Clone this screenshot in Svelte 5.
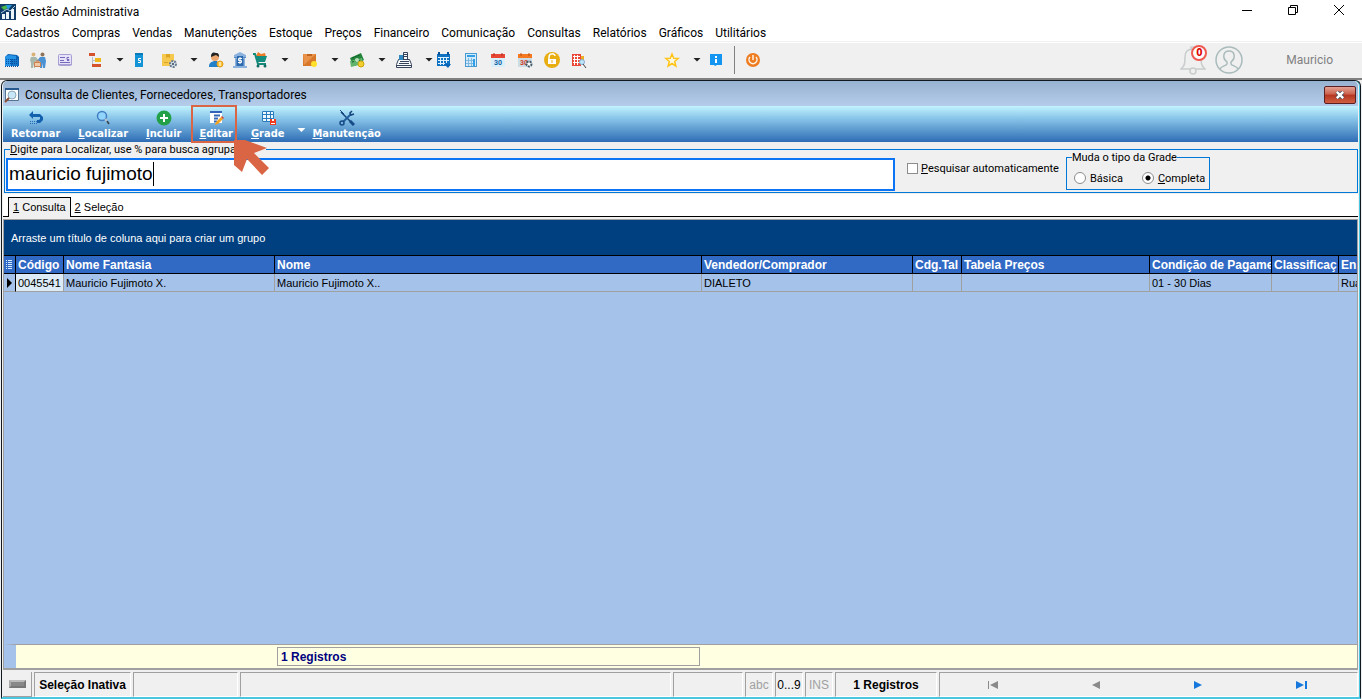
<script>
  const menus = [
    'Cadastros', 'Compras', 'Vendas', 'Manutenções', 'Estoque', 'Preços', 'Financeiro',
    'Comunicação', 'Consultas', 'Relatórios', 'Gráficos', 'Utilitários'
  ]

  const icons = {
    building: '<path fill="#0d62b5" d="M3 6l3-3 9 1 2 2v9H3z"/><path fill="#2493e8" d="M4 5l3-1 7 1v3H9v7H3V7z"/><path fill="#1576c9" d="M10 8h6v7h-6z"/><path stroke="#0b4f9c" stroke-dasharray="1 1" d="M4 8.500h12M4 10.500h12M4 12.500h12M3 15.500h13"/>',
    people: '<circle cx="4.500" cy="3.500" r="2" fill="#d9b27a"/><circle cx="13.500" cy="3.500" r="2" fill="#8f7359"/><path d="M2 6h5l3 4-1 2-3-2v7H5v-5l-1 5H2v-5L1 9z" fill="#a8b7ac"/><path d="M11 6h5l1 4-1 7h-2v-5l-1 5h-2v-7l-2 1-1-1z" fill="#4a92d4"/><path d="M5.500 11.500h6v4h-6zM7 11v-1h3v1" fill="#f0c9a8" stroke="#c98250"/>',
    card: '<rect x="2.500" y="3.500" width="13" height="11" rx="1" fill="#e6e2fa" stroke="#a79fd4"/><path d="M4 6.500h5M4 9.500h4M4 11.500h10" stroke="#7569ba"/><path d="M13 6.500h-2v2h2v1h-2" fill="none" stroke="#7569ba"/><path d="M2 13.500h14" stroke="#a79fd4"/>',
    tree: '<path d="M6.500 6v8.500H9M6 9.500h3" fill="none" stroke="#b9bfc4"/><path fill="#d4532c" d="M3 2h6v3H3zM6 13h9v3H6z"/><path fill="#efb719" d="M9 7h6v4H9z"/>',
    book: '<path fill="#1294d7" d="M5 2h8v14H5z"/><path fill="#087bbd" d="M5 2h8v2H5z"/><path d="M11 7.500H8.500v2h2v2H8" fill="none" stroke="#fff"/>',
    boxgear: '<path fill="#f6c94e" d="M2 3h12v12H2z"/><path fill="#dda724" d="M6 3h4v4l-2-1-2 1zM4 11h4v1H4z"/><circle cx="13" cy="13" r="3" fill="#d7e2ec" stroke="#697c90" stroke-width="2" stroke-dasharray="2 1"/><circle cx="13" cy="13" r="1" fill="#345"/>',
    user: '<path d="M2 16c0-5 3-5 5-6h3l4 6z" fill="#2381ca"/><circle cx="8" cy="6" r="4" fill="#eda66d"/><path d="M4 6c0-5 3-5 5-4 3 0 3 2 3 4L9 4z" fill="#242424"/><circle cx="13" cy="13" r="3" fill="#ffc436" stroke="#e09c1a"/><path d="M13 11v4" stroke="#fff"/>',
    bank: '<path d="M3 4l6-3 6 3v3H3zM4 7h10v8H4zM2 15h14v2H2z" fill="#8bb2dd"/><path d="M5.500 8v7M12.500 8v7M3 6.500h12" stroke="#5c8cc6"/><path d="M6 5h6v10H6z" fill="#2d6bae"/><path d="M11 7.500H7.500v2h3v2H7M9 6v7" fill="none" stroke="#fff"/>',
    cart: '<path d="M5 5l2-4 3 2 4-1 1 4z" fill="#ef7d28"/><path d="M2 3h2l3 10h8" fill="none" stroke="#188a79" stroke-width="2"/><path d="M4 5h12l-2 6H6z" fill="#158d7e"/><circle cx="7" cy="15" r="1.500" fill="#146c63"/><circle cx="14" cy="15" r="1.500" fill="#146c63"/>',
    box: '<path fill="#d6772a" d="M2 3h13v12H2z"/><path fill="#e8924a" d="M2 3h13L3 14z"/><path fill="#c0641f" d="M6 3h5v2H6z"/><circle cx="13" cy="13" r="3" fill="#ffe02b"/>',
    money: '<path fill="#25843c" d="M2 7l11-5 3 7-11 6z"/><path fill="#60b46b" d="M2 10l12-3 1 6-12 3z"/><path d="M4 7l8-3M4 11l9-2" stroke="#0e6026" stroke-dasharray="2 1"/><circle cx="9" cy="9" r="2" fill="#b8e1ba"/><circle cx="13" cy="13" r="3" fill="#f4cd31" stroke="#c9a50b"/>',
    register: '<path d="M8.500 1.500h4v7h-4zM1.500 16.500v-3l2-5h11l2 5v3z" fill="#f8fbff" stroke="#364259"/><path fill="#318ac2" d="M4 4h4v5H4z"/><path d="M9 3.500h3M9 5.500h3M5 10.500h9M4 12.500h10M2 14.500h14" stroke="#364259"/>',
    calendar: '<path fill="#0f72c3" d="M2 3h13v12H2z"/><path stroke="#dff2ff" d="M3 6.500h11M3 9.500h11M3 12.500h7M5.500 6v8M8.500 6v8M11.500 6v6"/><path d="M4 1v3M13 1v3" stroke="#075194" stroke-width="2"/><path d="M9 13h7l-3 4z" fill="#0865b7"/>',
    calc: '<rect x="3.500" y="2.500" width="11" height="13" fill="#d3ebfb" stroke="#4b9bd1"/><path fill="#319ee5" d="M5 4h8v2H5zM11 8h2v7h-2z"/><path d="M6.500 7v8M9.500 7v8M4 9.500h7M4 12.500h7" stroke="#7db8e0"/>',
    date: '<rect x="2" y="3" width="14" height="13" rx="1" fill="#d9effc"/><path d="M2 3h14v4H2z" fill="#e94735"/><path d="M5 2v3M13 2v3" stroke="#b62a21"/><text x="9" y="14" text-anchor="middle" font-size="7" font-weight="bold" font-family="Roboto, sans-serif" fill="#1265a5">30</text>',
    dategear: '<rect x="2" y="3" width="14" height="13" rx="1" fill="#ccdce5"/><path d="M2 3h14v4H2z" fill="#f57920"/><path d="M5 2v3M13 2v3" stroke="#b95310"/><text x="8" y="14" text-anchor="middle" font-size="7" font-weight="bold" font-family="Roboto, sans-serif" fill="#d5402c">30</text><circle cx="13" cy="13" r="2.500" fill="#fff" stroke="#455b67" stroke-width="2" stroke-dasharray="2 1"/>',
    lock: '<circle cx="9" cy="9" r="8" fill="#e9ae12"/><path d="M6 8V6c0-4 6-4 6-1" fill="none" stroke="#fff" stroke-width="1.500"/><rect x="5" y="8" width="8" height="5" fill="#fff"/><path d="M9 9v3" stroke="#e9ae12"/>',
    search: '<path fill="#e94737" d="M2 3h9v12H2z"/><path stroke="#fff" d="M3 5.500h7M3 8.500h7M3 11.500h7M4.500 4v10M7.500 4v10"/><path fill="#edac22" d="M11 5h3v5h-3z"/><circle cx="12" cy="11" r="2.500" fill="#bce6fa" stroke="#8aadd0"/><path d="M13 13l3 4" stroke="#444"/>',
    star: '<path d="M9 3l1.700 4.200 4.500.3-3.500 3 1.200 4.500L9 12.500 5.100 15l1.200-4.500-3.500-3 4.500-.3z" fill="#fff9df" stroke="#ffc51b" stroke-width="1.500"/>',
    info: '<path fill="#1595f2" d="M3 3h12v11h-5l-2 1-1-1H3z"/><path fill="#fff" d="M8 5h2v2H8zM8 8h2v4H8z"/>',
    power: '<circle cx="9" cy="9" r="7" fill="#ee7c20"/><path d="M6 6a4 4 0 1 0 6 0M9 4v5" fill="none" stroke="#fff3e6" stroke-width="1.500"/>'
  }

  // gap: distance to the previous item, see the .gap-* classes
  const tools = [
    { icon: 'building', label: 'Empresas', gap: 'none' },
    { icon: 'people', label: 'Clientes', gap: 'normal' },
    { icon: 'card', label: 'Cartões', gap: 'normal' },
    { icon: 'tree', label: 'Plano de contas', gap: 'wide', more: true },
    { icon: 'book', label: 'Serviços', gap: 'snug' },
    { icon: 'boxgear', label: 'Produtos', gap: 'wide', more: true },
    { icon: 'user', label: 'Vendedores', gap: 'normal' },
    { icon: 'bank', label: 'Bancos', gap: 'snug' },
    { icon: 'cart', label: 'Compras', gap: 'tight', more: true },
    { icon: 'box', label: 'Estoque', gap: 'wide', more: true },
    { icon: 'money', label: 'Financeiro', gap: 'normal', more: true },
    { icon: 'register', label: 'Caixa', gap: 'normal', more: true },
    { icon: 'calendar', label: 'Agenda', gap: 'tight' },
    { icon: 'calc', label: 'Calculadora', gap: 'normal' },
    { icon: 'date', label: 'Calendário', gap: 'normal' },
    { icon: 'dategear', label: 'Configurar calendário', gap: 'normal' },
    { icon: 'lock', label: 'Bloquear', gap: 'normal' },
    { icon: 'search', label: 'Pesquisar', gap: 'normal' },
    { icon: 'star', label: 'Favoritos', gap: 'far', more: true },
    { icon: 'info', label: 'Informações', gap: 'snug' }
  ]

  const actionIcons = {
    back: '<path d="M1 5l4-4v3h7l3 3v3l-3 3H9v-3h2l1-1V7H5v2z" fill="#1260ae"/><path d="M2 11.500h8M2 13.500h8" stroke="#256fba" stroke-dasharray="1 1"/>',
    find: '<circle cx="7" cy="6" r="4.500" fill="#91d4fc" stroke="#427dc0" stroke-width="1.500"/><path d="M10 9l2 2" stroke="#b8c3ce" stroke-width="2"/><path d="M12 11l2 3" stroke="#35414b" stroke-width="1.500"/>',
    add: '<circle cx="8" cy="8" r="7.500" fill="#22a148"/><path d="M8 4v8M4 8h8" stroke="#fff" stroke-width="2"/>',
    edit: '<path fill="#fff" d="M2 2h12v11H2z"/><path fill="#3162b8" d="M2 1h12v2H2z"/><path d="M6 5.500h6M6 8.500h4M6 11.500h3" stroke="#3667b3" stroke-width="2"/><path d="M8 12l5-5 2 2-5 5-3 1z" fill="#f3a423"/><path d="M13 7l1-1 2 2-1 1z" fill="#d64234"/>',
    grid: '<path fill="#eef9ff" d="M2 1h12v11H2z"/><path d="M2.500 1.500h11v10h-11zM6.500 1v11M10.500 1v11M2 4.500h12M2 8.500h12" fill="none" stroke="#287bbc"/><path d="M10 9h6v6h-6z" fill="#ef3b20"/><path d="M12 9h2v2h-2zM11 13h4v1h-4z" fill="#fff"/>',
    tools: '<path d="M2 2l11 11" stroke="#17447c" stroke-width="1.500"/><path d="M12 4l-8 8" stroke="#235f9d" stroke-width="2"/><path d="M13 1l-2 2 1 2 3-1" fill="none" stroke="#17447c" stroke-width="1.500"/><circle cx="3" cy="13" r="2" fill="none" stroke="#164b87" stroke-width="1.500"/><path d="M11 11l4 4" stroke="#164b87" stroke-width="3"/><path d="M1 0l4 4" stroke="#164b87"/>'
  }

  const actions = [
    { key: '', rest: 'Retornar', icon: 'back' },
    { key: 'L', rest: 'ocalizar', icon: 'find' },
    { key: 'I', rest: 'ncluir', icon: 'add' },
    { key: 'E', rest: 'ditar', icon: 'edit', marked: true },
    { key: 'G', rest: 'rade', icon: 'grid', more: true },
    { key: 'M', rest: 'anutenção', icon: 'tools' }
  ]

  const columns = [
    { title: 'Código', width: 48 },
    { title: 'Nome Fantasia', width: 211 },
    { title: 'Nome', width: 427 },
    { title: 'Vendedor/Comprador', width: 211 },
    { title: 'Cdg.Tal', width: 49 },
    { title: 'Tabela Preços', width: 188 },
    { title: 'Condição de Pagame', width: 122 },
    { title: 'Classificaç', width: 67 },
    { title: 'En' }
  ]

  const rows = [
    ['0045541', 'Mauricio Fujimoto X.', 'Mauricio Fujimoto X..', 'DIALETO', '', '', '01 - 30 Dias', '', 'Rua']
  ]

  let query = $state('mauricio fujimoto')
  let auto = $state(false)
  let gridType = $state('completa')
</script>

<div class="app">
  <header class="titlebar">
    <svg class="logo" viewBox="0 0 16 16">
      <path fill="#123c68" d="M0 0h16v16H0z" />
      <path fill="#48b948" d="M1 3l6-2 2 2-5 3z" />
      <path fill="#2598df" d="M6 1h6L8 6z" />
      <path fill="#eef5fa" d="M2 10h3v5H2zM6 8h3v7H6zM11 5h3v10h-3z" />
      <path d="M1 9l6-4 3 2 5-5" fill="none" stroke="#a9c9df" />
    </svg>
    <h1>Gestão Administrativa</h1>
    <div class="window-controls">
      <button aria-label="Minimizar"><svg viewBox="0 0 12 12"><path d="M1 6.500h10" /></svg></button>
      <button aria-label="Restaurar"><svg viewBox="0 0 12 12"><path d="M1.500 3.500h7v7h-7zM3.500 3V1.500h7v7H9" /></svg></button>
      <button aria-label="Fechar"><svg viewBox="0 0 12 12"><path d="M1 1l10 10M11 1L1 11" /></svg></button>
    </div>
  </header>

  <nav class="menubar">
    {#each menus as menu}
      <button>{menu}</button>
    {/each}
  </nav>

  <div class="toolbar">
    {#each tools as tool}
      <button class="tool gap-{tool.gap}" aria-label={tool.label}>
        <svg viewBox="0 0 18 18">{@html icons[tool.icon]}</svg>
      </button>
      {#if tool.more}
        <button class="more" aria-label="Mais opções"></button>
      {/if}
    {/each}
    <span class="separator"></span>
    <button class="tool gap-normal" aria-label="Sair">
      <svg viewBox="0 0 18 18">{@html icons.power}</svg>
    </button>
    <div class="account">
      <button class="bell" aria-label="Notificações">
        <svg viewBox="0 0 26 30" fill="none" stroke="#c9cdcd" stroke-width="1.500">
          <path d="M1 24c3-3 4-4 4-12 0-5 3-8 8-8s8 3 8 8c0 8 1 9 4 12zM11 4V2h4v2" />
          <circle cx="13" cy="26" r="3" fill="#efefef" />
        </svg>
        <span class="count">0</span>
      </button>
      <svg class="avatar" viewBox="0 0 28 28" fill="none" stroke="#aabbbb" stroke-width="1.500">
        <circle cx="14" cy="14" r="13" />
        <path d="M5 23c1-3 6-3 7-5v-2C7 12 8 5 14 5s7 7 2 11v2c1 2 6 2 7 5" />
      </svg>
      <span class="name">Mauricio</span>
    </div>
  </div>

  <main class="child">
    <header class="child-title">
      <svg viewBox="0 0 16 16">
        <path fill="#fff" stroke="#557494" d="M1.500 1.500h13v12h-13z" />
        <path fill="#26598d" d="M1 1h14v2H1z" />
        <circle cx="8" cy="8" r="4" fill="#c7e6f7" stroke="#91a8b9" />
        <path d="M5 11l-4 4" stroke="#8a4a30" stroke-width="2" />
      </svg>
      <h2>Consulta de Clientes, Fornecedores, Transportadores</h2>
      <button class="close" aria-label="Fechar consulta">
        <svg viewBox="0 0 12 10"><path d="M2 1l8 8M10 1L2 9" stroke="#40485a" stroke-width="5" /><path d="M2 1l8 8M10 1L2 9" stroke="#fff" stroke-width="3" /></svg>
      </button>
    </header>

    <div class="actions">
      {#each actions as action}
        <button class="action" class:marked={action.marked}>
          <svg viewBox="0 0 16 16">{@html actionIcons[action.icon]}</svg>
          <span><u>{action.key}</u>{action.rest}</span>
          {#if action.marked}
            <svg class="pointer" viewBox="0 0 38 38">
              <path d="M1 0h11l22 8-13 5 15 15-7 7-15-16-5 13-8-7z" fill="#da6544" />
            </svg>
          {/if}
        </button>
        {#if action.more}
          <button class="more light" aria-label="Opções da grade"></button>
        {/if}
      {/each}
    </div>

    <div class="search-panel">
      <fieldset class="search">
        <legend><u>D</u>igite para Localizar, use % para busca agrupa</legend>
        <label class="query">
          <input type="text" aria-label="Localizar" bind:value={query} />
          <span class="caret"></span>
        </label>
        <label class="auto">
          <input type="checkbox" bind:checked={auto} />
          <span><u>P</u>esquisar automaticamente</span>
        </label>
        <fieldset class="grid-type">
          <legend>Muda o tipo da Grade</legend>
          <label><input type="radio" value="basica" bind:group={gridType} />Básica</label>
          <label><input type="radio" value="completa" bind:group={gridType} /><span><u>C</u>ompleta</span></label>
        </fieldset>
      </fieldset>
    </div>

    <div class="tabs" role="tablist">
      <button role="tab" aria-selected="true"><u>1</u> Consulta</button>
      <button role="tab" aria-selected="false"><u>2</u> Seleção</button>
    </div>

    <section class="grid">
      <div class="group-hint">Arraste um título de coluna aqui para criar um grupo</div>
      <table>
        <colgroup>
          <col class="indicator" />
          {#each columns as column}
            <col style:width={column.width ? `${column.width}px` : null} />
          {/each}
        </colgroup>
        <thead>
          <tr>
            <th class="mark">
              <svg viewBox="0 0 8 10"><path d="M1 .5h1M3 .5h4M1 2.500h1M3 2.500h4M1 4.500h1M3 4.500h4M1 6.500h1M3 6.500h4M1 8.500h1M3 8.500h4" stroke="#d6e8ff" /></svg>
            </th>
            {#each columns as column}
              <th>{column.title}</th>
            {/each}
          </tr>
        </thead>
        <tbody>
          {#each rows as row}
            <tr>
              <td class="mark"><svg viewBox="0 0 8 10"><path d="M2 0l5 5-5 5z" fill="#000" /></svg></td>
              {#each row as cell}
                <td>{cell}</td>
              {/each}
            </tr>
          {/each}
        </tbody>
      </table>
      <div class="summary">
        <div class="total">1 Registros</div>
      </div>
    </section>

    <footer class="status">
      <button class="led" aria-label="Seleção"><span></span></button>
      <div class="cell selection">Seleção Inativa</div>
      <div class="cell medium"></div>
      <div class="cell fill"></div>
      <div class="cell short"></div>
      <div class="cell key off">abc</div>
      <div class="cell key">0...9</div>
      <div class="cell key off">INS</div>
      <div class="cell records">1 Registros</div>
      <div class="cell pager">
        <button aria-label="Primeiro" disabled><svg viewBox="0 0 12 10"><path d="M1 1h1v8H1zM11 1v8L3 5z" /></svg></button>
        <button aria-label="Anterior" disabled><svg viewBox="0 0 12 10"><path d="M10 1v8L2 5z" /></svg></button>
        <button aria-label="Próximo"><svg viewBox="0 0 12 10"><path d="M2 1v8l8-4z" /></svg></button>
        <button aria-label="Último"><svg viewBox="0 0 12 10"><path d="M1 1v8l8-4zM10 1h2v8h-2z" /></svg></button>
      </div>
    </footer>
  </main>
</div>

<style>
  :global(body) {
    margin: 0;
    overflow: hidden;
  }

  .app,
  .app :global(*) {
    box-sizing: border-box;
  }

  .app {
    --ui: Roboto, 'Noto Sans', sans-serif;
    --bold: 'DejaVu Sans Condensed', 'DejaVu Sans', sans-serif;
    --grid: 'Liberation Sans', Arial, sans-serif;
    display: flex;
    flex-direction: column;
    height: 100vh;
    background: #f0f0f0;
    color: #000;
    font-family: var(--ui);
    font-size: 12px;
    white-space: nowrap;
  }

  button {
    padding: 0;
    border: 0;
    background: none;
    color: inherit;
    font: inherit;
  }

  svg {
    display: block;
  }

  .titlebar {
    display: flex;
    align-items: center;
    height: 23px;
    background: #fff;
  }

  .logo {
    width: 16px;
    height: 16px;
  }

  h1,
  h2 {
    margin: 0 0 0 5px;
    font-size: 12px;
    font-weight: 400;
  }

  .window-controls {
    display: flex;
    margin-left: auto;
  }

  .window-controls button {
    display: grid;
    place-items: center;
    width: 46px;
    height: 22px;
    padding-bottom: 3px;
  }

  .window-controls svg {
    width: 12px;
    height: 12px;
    fill: none;
    stroke: #000;
  }

  .menubar {
    display: flex;
    gap: 12px;
    height: 20px;
    padding-left: 5px;
    background: #fff;
    box-shadow: inset 0 -1px #fff, inset 0 -2px #f0f0f0;
    line-height: 20px;
  }

  .toolbar {
    display: flex;
    align-items: center;
    height: 37px;
    padding: 0 29px 2px 2px;
    border-bottom: 2px solid #808080;
  }

  .tool,
  .tool svg {
    width: 18px;
    height: 18px;
  }

  .gap-tight {
    margin-left: 2px;
  }

  .gap-snug {
    margin-left: 6px;
  }

  .gap-normal {
    margin-left: 9px;
  }

  .gap-wide {
    margin-left: 12px;
  }

  .gap-far {
    margin-left: 75px;
  }

  .more {
    width: 8px;
    height: 4px;
    margin-left: 12px;
    background: #222;
    clip-path: polygon(0 0, 100% 0, 50% 100%);
  }

  .separator {
    width: 1px;
    height: 28px;
    margin-left: 9px;
    background: #808080;
  }

  .account {
    display: flex;
    align-items: center;
    margin-left: auto;
  }

  .bell {
    position: relative;
    margin-right: 9px;
  }

  .bell svg {
    width: 26px;
    height: 30px;
  }

  .count {
    position: absolute;
    top: 0;
    right: -1px;
    width: 16px;
    height: 16px;
    border: 2px solid #ef5a50;
    border-radius: 50%;
    background: #fff;
    color: #e00000;
    font: bold 10px/12px var(--bold);
  }

  .avatar {
    width: 28px;
    height: 28px;
  }

  .name {
    margin-left: 43px;
    color: #808080;
  }

  .child {
    display: flex;
    flex: 1;
    flex-direction: column;
    min-height: 0;
    margin: 0 1px;
    border: 1px solid #101820;
    border-bottom: 2px solid #4cc5e0;
    border-radius: 6px 6px 0 0;
    box-shadow: inset -1px 0 #4cc5e0;
    padding: 0 2px 0 1px;
    background: #f0f0f0;
  }

  .child-title {
    display: flex;
    align-items: center;
    flex: none;
    height: 25px;
    padding: 2px 2px 0 1px;
    border-radius: 5px 5px 0 0;
    background: linear-gradient(#98b2d1, #b5cdea);
  }

  .child-title > svg {
    width: 16px;
    height: 16px;
  }

  .close {
    display: grid;
    place-items: center;
    width: 32px;
    height: 18px;
    margin-left: auto;
    border: 1px solid #5c1f22;
    border-radius: 2px;
    background: linear-gradient(#e3a294, #cc604c 45%, #b53420 50%, #cf6044);
  }

  .close svg {
    width: 12px;
    height: 8px;
  }

  .actions {
    display: flex;
    flex: none;
    align-items: flex-end;
    gap: 18px;
    height: 36px;
    padding: 0 8px;
    background: linear-gradient(#c2f3ff, #88c4e8 35%, #2e6db5);
    color: #fff;
    font: bold 11px/12px var(--bold);
  }

  .action {
    position: relative;
    display: flex;
    flex-direction: column;
    align-items: center;
    gap: 2px;
    height: 32px;
  }

  .action > svg:first-child {
    width: 16px;
    height: 16px;
  }

  .marked::before {
    content: '';
    position: absolute;
    inset: -5px -4px -1px -8px;
    border: 2px solid #da6544;
  }

  .pointer {
    position: absolute;
    z-index: 1;
    top: 30px;
    left: 34px;
    width: 38px;
    height: 38px;
  }

  .more.light {
    align-self: center;
    margin: 12px -11px 0 -5px;
    background: #fff;
  }

  .search-panel {
    flex: none;
    padding: 1px 0 1px 1px;
    font: 11px/13px var(--ui);
  }

  fieldset {
    min-width: 0;
    margin: 0;
    border: 1px solid #0078d7;
  }

  legend {
    padding: 0;
  }

  .search {
    display: flex;
    align-items: center;
    height: 50px;
    padding: 0 0 0 1px;
  }

  .search > legend {
    width: 256px;
    margin-left: 4px;
  }

  .query {
    display: flex;
    align-items: center;
    flex: 0 1 889px;
    height: 33px;
    margin-right: 12px;
    padding-left: 1px;
    border: 2px solid #0a74f5;
    background: #fff;
  }

  .query input {
    field-sizing: content;
    padding: 0;
    border: 0;
    outline: 0;
    background: none;
    font: 19px/24px var(--grid);
  }

  .caret {
    width: 1px;
    height: 24px;
    background: #000;
  }

  .auto,
  .grid-type,
  .grid-type label {
    display: flex;
    align-items: center;
  }

  .auto {
    gap: 3px;
    padding-bottom: 12px;
  }

  .auto input,
  .grid-type input {
    appearance: none;
    flex: none;
    width: 12px;
    height: 12px;
    margin: 0;
    border: 1px solid #8c8c8c;
    background: #fff;
  }

  .auto input {
    width: 11px;
    height: 11px;
  }

  .auto input:checked {
    background: #333;
  }

  .grid-type {
    gap: 19px;
    height: 39px;
    margin: 0 0 8px 7px;
    padding: 4px 4px 0 7px;
  }

  .grid-type legend {
    margin-left: -2px;
  }

  .grid-type label {
    gap: 4px;
  }

  .grid-type input {
    border-radius: 50%;
  }

  .grid-type input:checked {
    background: radial-gradient(circle, #000 2px, #fff 3px);
  }

  .tabs {
    display: flex;
    flex: none;
    height: 23px;
    padding: 3px 0 0 5px;
    background: #fff;
    box-shadow: inset 0 -1px #000;
    font: 11px/19px var(--grid);
  }

  .tabs button {
    padding: 0 4px;
  }

  .tabs [aria-selected='true'] {
    border: 1px solid #000;
    border-bottom: 0;
    background: #f0f0f0;
  }

  .grid {
    display: flex;
    flex: 1;
    flex-direction: column;
    min-height: 0;
    margin-top: 2px;
    border: 1px solid #a0a0a0;
    border-bottom-width: 2px;
    background: #a4c2ea;
    font: 11px/16px var(--grid);
  }

  .group-hint {
    flex: none;
    height: 35px;
    padding-left: 7px;
    background: #004080;
    color: #fff;
    line-height: 36px;
  }

  table {
    width: 100%;
    border-collapse: separate;
    border-spacing: 0;
    table-layout: fixed;
  }

  .indicator {
    width: 12px;
  }

  th,
  td {
    height: 18px;
    overflow: hidden;
    padding: 0 2px;
    border-right: 1px solid #a0a0a0;
    border-bottom: 1px solid #a0a0a0;
    text-align: left;
  }

  th {
    height: 19px;
    border-top: 1px solid #000;
    border-right-color: #000;
    border-bottom-color: #000;
    background: #316ac5;
    color: #fff;
    font-size: 12px;
  }

  th:last-child,
  td:last-child {
    padding-right: 0;
    border-right: 0;
  }

  td:nth-child(2) {
    background: #dcebf5;
  }

  .mark {
    padding: 0 1px;
  }

  td.mark {
    border-right-color: #000;
  }

  .mark svg {
    width: 8px;
    height: 10px;
  }

  .summary {
    height: 24px;
    margin-top: auto;
    padding: 2px 657px 2px 261px;
    border-top: 1px solid #a0a0a0;
    border-left: 12px solid #a4c2ea;
    background: #ffffe1;
  }

  .total {
    height: 19px;
    padding-left: 3px;
    border: 1px solid #a0a0a0;
    color: #000080;
    font-size: 12px;
    font-weight: 700;
    line-height: 18px;
  }

  .status {
    display: flex;
    flex: none;
    gap: 2px;
    height: 27px;
    padding-top: 2px;
    font: 12px/24px var(--grid);
  }

  .led {
    display: grid;
    place-items: center;
    width: 29px;
    border-right: 1px solid #a0a0a0;
    border-bottom: 1px solid #a0a0a0;
  }

  .led span {
    width: 17px;
    height: 8px;
    border: 2px solid #777;
    border-top-color: #bbb;
    border-left-color: #aaa;
    background: #888;
  }

  .cell {
    flex: none;
    border: 1px solid;
    border-color: #a0a0a0 #fff #fff #a0a0a0;
    text-align: center;
  }

  .selection {
    width: 97px;
    font-weight: 700;
  }

  .medium {
    width: 105px;
  }

  .fill {
    flex: 1;
  }

  .short {
    width: 70px;
  }

  .key {
    width: 28px;
  }

  .off {
    color: #a0a0a0;
  }

  .records {
    width: 102px;
    font-weight: 700;
  }

  .pager {
    display: flex;
    justify-content: space-between;
    width: 419px;
    padding: 0 50px 0 47px;
  }

  .pager svg {
    width: 12px;
    height: 10px;
    fill: #1678dc;
  }

  .pager :disabled svg {
    fill: #8a8a8a;
  }
</style>
